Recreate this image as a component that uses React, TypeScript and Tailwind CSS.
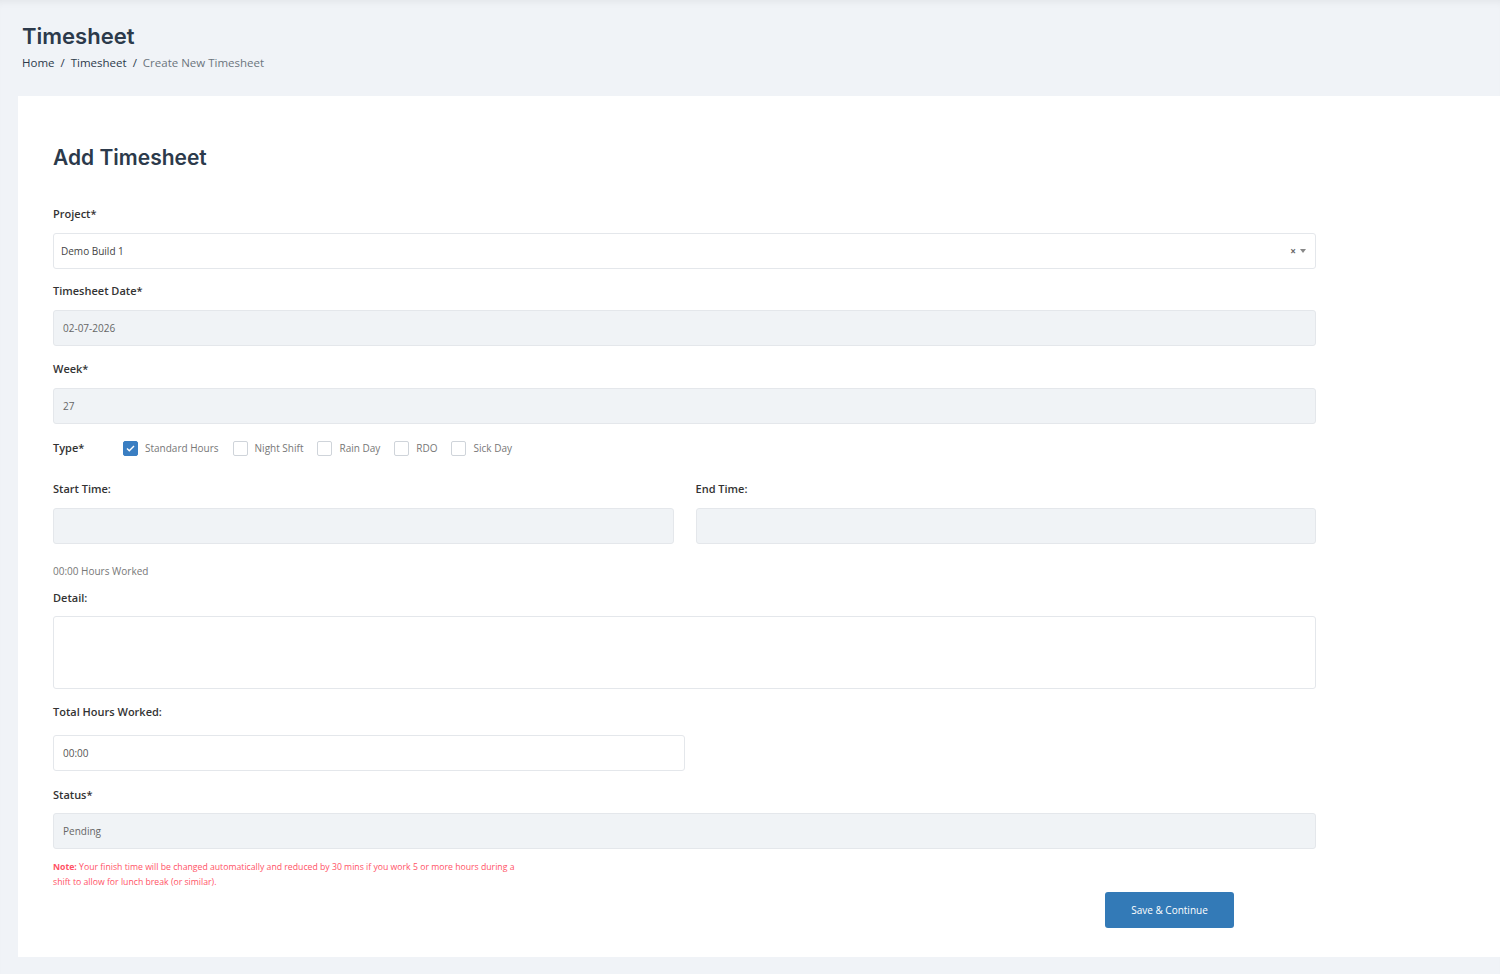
import { useState } from "react";

const types = ["Standard Hours", "Night Shift", "Rain Day", "RDO", "Sick Day"];

function Label({ children, className = "" }: { children: React.ReactNode; className?: string }) {
  return <div className={`h-4 leading-4 text-[11px] font-semibold text-[#333] ${className}`}>{children}</div>;
}

function Field({ value, disabled, className = "" }: { value?: string; disabled?: boolean; className?: string }) {
  return (
    <div
      className={`h-9 flex items-center px-[9px] rounded-[3px] border border-[#e4e7eb] text-[10px] ${
        disabled ? "bg-[#f0f3f6] text-[#666]" : "bg-white text-[#555]"
      } ${className}`}
    >
      {value}
    </div>
  );
}

export default function App() {
  const [checked, setChecked] = useState<string[]>(["Standard Hours"]);

  const toggle = (t: string) =>
    setChecked(checked.includes(t) ? checked.filter((c) => c !== t) : [...checked, t]);

  return (
    <div
      className="min-h-[974px] bg-[#f0f3f7] shadow-[inset_0_7px_8px_-6px_rgba(0,0,0,0.07)]"
      style={{ fontFamily: '"Open Sans", sans-serif' }}
    >
      <div className="pl-[22px] pt-[22px] h-[96px]">
        <h1 className="text-[22px] leading-7 font-semibold text-[#2c3a4b]" style={{ fontFamily: "Inter, sans-serif" }}>
          Timesheet
        </h1>
        <div className="mt-[4px] flex items-center gap-[6px] text-[11.5px] text-[#2c3a4b]">
          <span>Home</span>
          <span>/</span>
          <span>Timesheet</span>
          <span>/</span>
          <span className="text-[#6c757d]">Create New Timesheet</span>
        </div>
      </div>

      <div className="ml-[18px] bg-white pl-[35px] pr-[184px] pt-[48px] pb-[29px]">
        <h2 className="text-[21px] leading-7 font-semibold text-[#2c3a4b]" style={{ fontFamily: "Inter, sans-serif" }}>
          Add Timesheet
        </h2>

        <Label className="mt-[34px]">Project*</Label>
        <div className="mt-[11px] h-9 flex items-center justify-between pl-[7px] pr-[9px] rounded-[3px] border border-[#e4e7eb] text-[10px] text-[#444]">
          <span>Demo Build 1</span>
          <span className="flex items-center gap-[4px] text-[#666]">
            <span className="text-[10px] font-bold leading-none">×</span>
            <svg width="6" height="4" viewBox="0 0 6 4">
              <path d="M0 0h6L3 4z" fill="#888" />
            </svg>
          </span>
        </div>

        <Label className="mt-[14px]">Timesheet Date*</Label>
        <Field className="mt-[11px]" value="02-07-2026" disabled />

        <Label className="mt-[15px]">Week*</Label>
        <Field className="mt-[11px]" value="27" disabled />

        <div className="mt-[16px] h-4 flex items-center">
          <span className="w-[70px] text-[11px] font-semibold text-[#333]">Type*</span>
          {types.map((t) => {
            const on = checked.includes(t);
            return (
              <label key={t} className="flex items-center mr-[14px] cursor-pointer" onClick={() => toggle(t)}>
                <span
                  className={`w-[15px] h-[15px] rounded-[2px] border flex items-center justify-center ${
                    on ? "bg-[#3a7ec2] border-[#3a7ec2]" : "bg-white border-[#cfd4da]"
                  }`}
                >
                  {on && (
                    <svg width="9" height="7" viewBox="0 0 9 7">
                      <path d="M1 3.5l2.3 2.3L8 1" stroke="white" strokeWidth="1.4" fill="none" />
                    </svg>
                  )}
                </span>
                <span className="ml-[7px] text-[10px] text-[#777]">{t}</span>
              </label>
            );
          })}
        </div>

        <div className="mt-[25px] grid grid-cols-2 gap-x-[22px]">
          <div>
            <Label>Start Time:</Label>
            <Field className="mt-[11px]" disabled />
          </div>
          <div>
            <Label>End Time:</Label>
            <Field className="mt-[11px]" disabled />
          </div>
        </div>

        <div className="mt-[19px] h-4 leading-4 text-[10px] text-[#777]">00:00 Hours Worked</div>

        <Label className="mt-[11px]">Detail:</Label>
        <div className="mt-[10px] h-[73px] rounded-[3px] border border-[#e4e7eb] bg-white" />

        <Label className="mt-[15px]">Total Hours Worked:</Label>
        <Field className="mt-[15px] w-[632px]" value="00:00" />

        <Label className="mt-[16px]">Status*</Label>
        <Field className="mt-[10px]" value="Pending" disabled />

        <p className="mt-[11px] text-[8.7px] leading-[15px] text-[#ff5266]">
          <b className="font-bold">Note:</b> Your finish time will be changed automatically and reduced by 30 mins if you work 5 or more hours during a
          <br />
          shift to allow for lunch break (or similar).
        </p>

        <div className="mt-[2px] flex justify-end pr-[82px]">
          <button className="h-9 w-[129px] rounded-[3px] bg-[#337ab7] text-white text-[10px]">Save &amp; Continue</button>
        </div>
      </div>
    </div>
  );
}
